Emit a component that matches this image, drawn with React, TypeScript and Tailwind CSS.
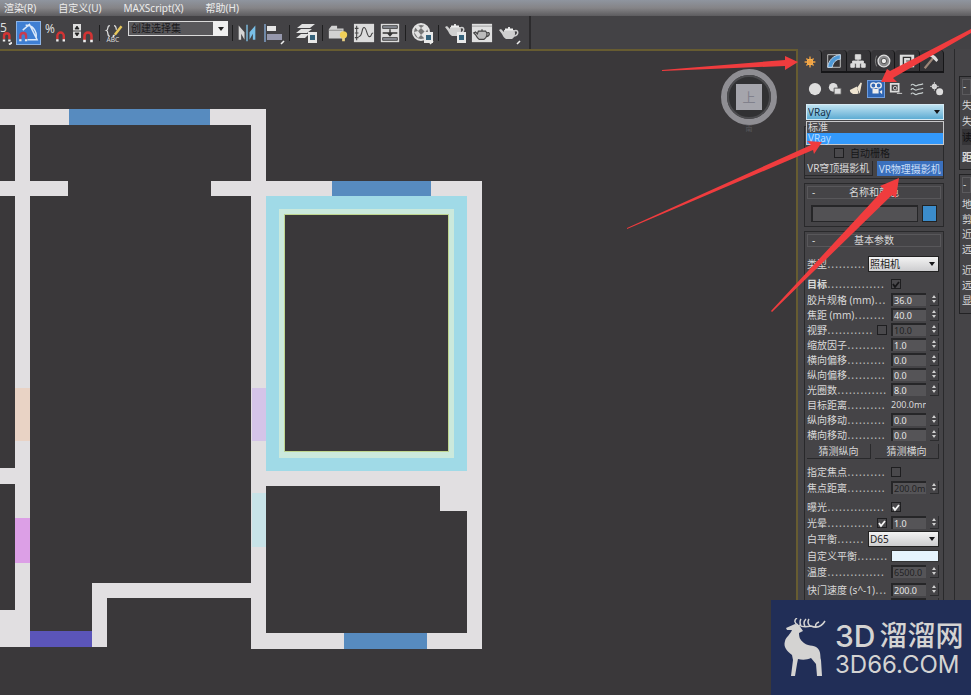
import React from "react";

const menus = ["渲染(R)", "自定义(U)", "MAXScript(X)", "帮助(H)"];

function Tool({ label, w, active, children }: { label: string; w: string; active?: boolean; children: React.ReactNode }) {
  return (
    <button aria-label={label} className={`flex h-6 shrink-0 items-center justify-center ${w} ${active ? "border border-[#8db4e6] bg-[#3f7fd3]" : ""}`}>
      <svg viewBox="0 0 24 24" className="h-6 w-full shrink-0" fill="none">{children}</svg>
    </button>
  );
}

const Sep = () => <span className="h-4 w-px shrink-0 bg-[#1e1e1f]" />;

const Magnet = () => (
  <>
    <path d="M13.500 19v-4a3.500 3.500 0 0 1 7 0v4" stroke="#d23434" strokeWidth="2.600" />
    <path d="M12.200 20h2.600M19.200 20h2.600" stroke="#eee" strokeWidth="2.600" />
  </>
);

const Flyout = () => <path d="M20 23l3-3" stroke="#eee" strokeWidth="1.6" />;

const Teapot = () => (
  <>
    <path d="M7 9h10c2 3 1 7-2 9H9c-2-1-3-3-4-5L2 9l2-1 3 3z" fill="#cfcfcf" />
    <path d="M17 10c5-2 5 4 0 5" stroke="#cfcfcf" strokeWidth="1.5" />
    <path d="M8 8.500h8M12 8V6" stroke="#efefef" strokeWidth="1.8" />
  </>
);

const Page = () => (
  <>
    <path d="M14 11h9v11h-9z" fill="#e8e8e8" />
    <path d="M16 14h5v5h-5z" fill="#35637c" />
  </>
);

function Toolbar() {
  return (
    <div className="flex h-[33px] shrink-0 items-center gap-1 overflow-hidden bg-[#434245]">
      <button aria-label="5" className="relative h-6 w-3 shrink-0">
        <svg viewBox="0 0 12 24" className="h-6 w-3" fill="none">
          <text x="0" y="11" fontSize="12" fill="#ddd" fontFamily="Noto Sans">5</text>
          <path d="M4 18v-3a2.700 2.700 0 0 1 5.400 0v3" stroke="#d23434" strokeWidth="2.400" />
          <path d="M2.800 19.500h2.400M8.200 19.500h2.400M9 23.500l3-2" stroke="#eee" strokeWidth="2" />
        </svg>
      </button>
      <Tool label="角度捕捉" w="w-[25px]" active>
        <path d="M3.500 18v-3a3 3 0 0 1 6 0v3" stroke="#c83c50" strokeWidth="2.400" />
        <path d="M2.300 19.500h2.400M8.300 19.500h2.400" stroke="#eee" strokeWidth="2" />
        <path d="M6 9L13 3l8 16H11M9 4c7-1 12 6 11 13" stroke="#dbe9fa" strokeWidth="1.500" />
      </Tool>
      <Tool label="百分比捕捉" w="w-[22px]">
        <text x="0" y="12" fontSize="13" fill="#ddd" fontFamily="Noto Sans">%</text>
        <Magnet />
      </Tool>
      <Tool label="微调器捕捉" w="w-6">
        <path d="M2 3h8v14H2z" fill="#ddd" />
        <path d="M4 8l2-3 2 3zM4 12l2 3 2-3zM2 10h8" fill="#222" stroke="#222" strokeWidth=".8" />
        <Magnet />
      </Tool>
      <Sep />
      <Tool label="编辑命名选择集" w="w-5">
        <path d="M7 3C3 3 6 8 3 9c3 1 0 7 4 7M12 3c3 0 2 3 3 5" stroke="#ddd" strokeWidth="1.500" />
        <path d="M21 4l-8 10" stroke="#e8c75a" strokeWidth="3" />
        <path d="M12.500 14.500l-2 2" stroke="#eee" strokeWidth="2" />
        <text x="3" y="23" fontSize="8" fill="#ddd" fontFamily="Noto Sans">ABC</text>
      </Tool>
      <div className="relative mb-2 h-[15px] w-[100px] shrink-0">
        <select aria-label="命名选择集" className="block h-full w-full appearance-none border border-[#dadada] bg-[#59585b] px-0.5 text-[10px] leading-[13px] text-[#19191b]">
          <option>创建选择集</option>
        </select>
        <span className="pointer-events-none absolute inset-y-0 right-0 flex w-[15px] items-center justify-center bg-[#f0f0f0]">
          <svg viewBox="0 0 6 4" className="h-1 w-1.5"><path d="M0 0h6L3 4z" fill="#222" /></svg>
        </span>
      </div>
      <Sep />
      <Tool label="镜像" w="w-5">
        <path d="M2 20V3l7 8v9l-4-7v7z" fill="#d6d6d6" />
        <path d="M22 20V3l-7 8v9l4-7v7z" fill="#79bfe8" />
        <path d="M12 2v20" stroke="#86cdf5" strokeWidth="1.500" />
      </Tool>
      <Tool label="对齐" w="w-6">
        <path d="M4 3v18" stroke="#7fa2c8" strokeWidth="1.500" />
        <path d="M6 5h9v5H6z" fill="#e6e6e6" />
        <path d="M6 13h15v6H6z" fill="#9698ad" />
        <Flyout />
      </Tool>
      <Sep />
      <Tool label="层管理器" w="w-6">
        <path d="M8 3h13l-5 4H3zM7 8h11l-5 4H2zM7 13h8l-4 4H2z" fill="#e2e2e2" />
        <Page />
      </Tool>
      <Sep />
      <Tool label="石墨建模工具" w="w-[22px]">
        <path d="M2 8l3-4h6v3h7v11H2z" fill="#d2d2d2" />
        <path d="M2 9h15" stroke="#888" />
        <circle cx="18" cy="14" r="4" fill="#f0cf58" />
        <path d="M18 17v4" stroke="#e9d084" strokeWidth="3" />
      </Tool>
      <Tool label="曲线编辑器" w="w-[22px]">
        <path d="M1 2h22v20H1z" fill="#dcdcdc" />
        <path d="M4 4v16M2 7h4M2 12h4M2 17h4M6 16c5 0 3-10 6-10s3 10 6 10 1-4 4-4" stroke="#444" strokeWidth="1.200" />
      </Tool>
      <Tool label="图解视图" w="w-[22px]">
        <path d="M2 2h20v20H2z" fill="#dcdcdc" />
        <path d="M4 4h16v3H4zM4 17h16v3H4z" fill="#8b8e96" stroke="#444" />
        <path d="M4 12h16M12 8v6M9.500 12L12 15l2.500-3" stroke="#333" strokeWidth="1.500" />
      </Tool>
      <Sep />
      <Tool label="材质编辑器" w="w-6">
        <circle cx="11" cy="11" r="8" fill="#777" stroke="#e2e2e2" strokeWidth="2" />
        <path d="M5 6l3-2 3 3-3 3zM11 7l4-3 3 4-3 3zM4 11l4-1 3 4-3 3zM11 14l4-4 4 3-4 5z" fill="#e2e2e2" />
        <Page />
        <Flyout />
      </Tool>
      <Sep />
      <Tool label="渲染设置" w="w-6">
        <g transform="translate(0 -3)"><Teapot /></g>
        <Page />
      </Tool>
      <Tool label="渲染帧窗口" w="w-[22px]">
        <path d="M1 2h22v20H1z" fill="#e0e0e0" />
        <path d="M1 4.500h22" stroke="#999" />
        <path d="M8 10h8c3 3 1 7-2 9H9c-2-1-3-3-4-5l-2-2 2-1 2 2zM17 12c4-2 4 3 0 4M12 10V8" stroke="#444" strokeWidth="1.300" fill="#bbb" />
      </Tool>
      <Tool label="渲染产品" w="w-6">
        <Teapot />
        <Flyout />
      </Tool>
      <span className="ml-1 h-full w-0.5 bg-[#2c2b2d]" />
    </div>
  );
}

function Viewport() {
  return (
    <main className="relative min-w-0 flex-1 overflow-hidden border-t-2 border-r-2 border-[#675c31] bg-[#3a383a]">
      <svg width="500" height="660" viewBox="0 51 500 660" className="block" role="img" aria-label="户型平面图">
        <g fill="#e1dfe1">
          <path d="M0 109h266v16H0zM0 181h68v15H0zM211 181h271v15H211zM15 109h15v538H15zM251 109h15v540H251zM467 181h15v468h-15zM0 468h30v16H0zM251 470h231v16H251zM440 470h42v41h-42zM251 633h231v16H251zM92 583h174v15H92zM92 583h15v64H92zM0 610h30v37H0z" />
        </g>
        <path d="M69 109h141v16H69zM332 181h99v15h-99zM344 633h83v16h-83z" fill="#578bbf" />
        <path d="M266 196h201v275H266z" fill="#a0dae7" />
        <path d="M279 209h175v249H279z" fill="#cbe9dc" />
        <path d="M284.500 214.500h164v237h-164z" fill="#3a383a" stroke="#bfd58f" />
        <path d="M15 388h15v53H15z" fill="#e9d3c5" />
        <path d="M15 518h15v45H15z" fill="#dc9fe6" />
        <path d="M252 388h14v53h-14z" fill="#d4c4e8" />
        <path d="M252 493h14v54h-14z" fill="#c8e3e8" />
        <path d="M30 631h62v16H30z" fill="#5b55b9" />
      </svg>
      <svg viewBox="0 0 60 64" className="absolute top-[17px] right-[17px] h-16 w-[60px]" role="img" aria-label="视图立方体">
        <circle cx="30" cy="29" r="25" fill="none" stroke="#8f8e93" strokeWidth="6" />
        <circle cx="30" cy="29" r="21" fill="#313133" stroke="#4b4b4e" strokeWidth="2" />
        <path d="M17 16h26v26H17z" fill="#a5a5ac" />
        <text x="30" y="34" fontSize="13" textAnchor="middle" fill="#81818c" fontFamily="Noto Sans CJK SC">上</text>
        <text x="30" y="63" fontSize="7" textAnchor="middle" fill="#59595d" fontFamily="Noto Sans CJK SC">南</text>
      </svg>
    </main>
  );
}

const tabs: [string, React.ReactNode][] = [
  ["创建", <><circle cx="10" cy="10" r="3.500" fill="#ffd27a" /><path d="M10 4v12M4 10h12M6 6l8 8M14 6l-8 8" stroke="#f0a040" strokeWidth="1.500" /></>],
  ["修改", <><path d="M3 3h14v14H3z" stroke="#ccc" /><path d="M3 17C4 9 9 4 17 3v5c-5 0-8 4-9 9z" fill="#4f9ad8" stroke="#cde" /></>],
  ["层次", <path d="M7 3h6v5H7zM2 13h4v4H2zM8 13h4v4H8zM14 13h4v4h-4zM10 8v5M4 13v-3h12v3" fill="#ddd" stroke="#ddd" />],
  ["运动", <><circle cx="11" cy="10" r="6.500" fill="#8b8b8d" stroke="#ddd" strokeWidth="1.500" /><circle cx="11" cy="10" r="3" fill="#eee" stroke="#444" /><path d="M3 4c-2 4-2 8 0 12" stroke="#888" /></>],
  ["显示", <><path d="M2 3h16v14H2z" fill="#ddd" /><path d="M6 6h8v8H6z" stroke="#333" strokeWidth="1.500" /><path d="M9 10h6" stroke="#333" /></>],
  ["工具", <><path d="M3 18L13 6" stroke="#9b8577" strokeWidth="2.500" /><path d="M7 4c4-2 8-1 11 5l-2 2-5-5z" fill="#ddd" /></>],
];

const cats: [string, React.ReactNode][] = [
  ["几何体", <circle cx="8" cy="8" r="7" fill="#dedede" />],
  ["图形", <><circle cx="6" cy="6" r="5" fill="#ddd" /><path d="M7 7h8v7H7z" fill="#ddd" stroke="#555" /></>],
  ["灯光", <><path d="M14 1l-4 6 2 4z" fill="#eee4d0" stroke="#eee4d0" strokeWidth="1.500" /><path d="M9 5L1 9c0 4 5 6 10 4z" fill="#eee4d0" /></>],
  ["摄影机", <><circle cx="5" cy="4" r="3" stroke="#eee" strokeWidth="1.500" /><circle cx="11" cy="4" r="3" stroke="#eee" strokeWidth="1.500" /><path d="M4 8h7v5H4zM12 11l3-2v5z" fill="#eee" /></>],
  ["辅助对象", <><path d="M2 2h9v9H2z" stroke="#ddd" strokeWidth="2" /><circle cx="7" cy="7" r="2" stroke="#ddd" /><path d="M9 13h6" stroke="#ddd" /></>],
  ["空间扭曲", <path d="M1 4c3-4 4 2 7 0s4 0 7-2M1 9c3-4 4 2 7 0s4 0 7-2M1 14c3-4 4 2 7 0s4 0 7-2" stroke="#c8d0d0" strokeWidth="1.300" />],
  ["系统", <><circle cx="5" cy="5" r="3" fill="#ddd" /><circle cx="11" cy="11" r="4" fill="#ddd" /><path d="M5 0v10M0 5h10" stroke="#ccc" /></>],
];

function Arrow() {
  return (
    <span className="pointer-events-none absolute inset-y-0 right-1 flex items-center">
      <svg viewBox="0 0 6 4" className="h-1 w-1.5"><path d="M0 0h6L3 4z" fill="#161618" /></svg>
    </span>
  );
}

function Spinner({ label }: { label: string }) {
  return (
    <button aria-label={`${label} 微调`} className="ml-1 flex h-[13px] w-[9px] shrink-0 items-center justify-center border-r border-b border-[#2c2c2e]">
      <svg viewBox="0 0 6 10" className="h-2.5 w-1.5"><path d="M1 4l2-3 2 3zM1 6h4L3 9z" fill="#d0d0d0" /></svg>
    </button>
  );
}

function Name({ text, id, dots }: { text: string; id: string; dots: number }) {
  return (
    <label htmlFor={id} className="flex min-w-0 flex-1 items-center whitespace-nowrap">
      {text}
      <span aria-hidden="true" className="font-['DejaVu_Sans',sans-serif] text-[12px] leading-[14px] font-normal text-[#b4b4b4]">{".".repeat(dots)}</span>
    </label>
  );
}

function Tick({ id, label, on, dark }: { id?: string; label?: string; on?: boolean; dark?: boolean }) {
  return (
    <span className="relative flex h-2.5 w-2.5 shrink-0">
      <input id={id} aria-label={label} type="checkbox" defaultChecked={on} className="h-2.5 w-2.5 appearance-none border border-[#1e1e20] bg-[#4a494c]" />
      {on && (
        <svg viewBox="0 0 10 10" className="pointer-events-none absolute inset-0 h-2.5 w-2.5" fill="none">
          <path d="M2 5l2 3 4-5" stroke={dark ? "#161618" : "#f5f5f5"} strokeWidth="1.800" />
        </svg>
      )}
    </span>
  );
}

function NumRow({ name, value, dots, dim, check }: { name: string; value: string; dots: number; dim?: boolean; check?: "on" | "off" }) {
  return (
    <div className="flex h-[15px] shrink-0 items-center">
      <Name text={name} id={name} dots={dots} />
      {check && <Tick label={`启用${name}`} on={check === "on"} />}
      <input id={name} defaultValue={value} className={`ml-1 h-[13px] w-[35px] shrink-0 border-t-2 border-l-2 border-[#262628] bg-[#555457] pl-px text-[9px] leading-[11px] ${dim ? "text-[#222224]" : "text-[#e6e6e6]"}`} />
      <Spinner label={name} />
    </div>
  );
}

function CheckRow({ name, dots, on, dark }: { name: string; dots: number; on?: boolean; dark?: boolean }) {
  return (
    <div className="flex h-4 shrink-0 items-center">
      <Name text={name} id={name} dots={dots} />
      <span className="ml-1 w-12"><Tick id={name} on={on} dark={dark} /></span>
    </div>
  );
}

function SelectRow({ name, value, dots }: { name: string; value: string; dots: number }) {
  return (
    <div className="flex h-[18px] shrink-0 items-center">
      <Name text={name} id={name} dots={dots} />
      <div className="relative h-4 w-[71px] shrink-0">
        <select id={name} className="block h-full w-full appearance-none border border-[#222] bg-linear-to-b from-[#f3f3f3] to-[#cdcdcf] px-px text-[10px] leading-[14px] text-[#1c1c1e]">
          <option>{value}</option>
        </select>
        <Arrow />
      </div>
    </div>
  );
}

function Header({ title }: { title: string }) {
  return (
    <button className="relative flex h-[13px] w-full shrink-0 items-center justify-center border border-[#58575a] text-[10px] leading-[11px]">
      <span className="absolute left-1">-</span>
      {title}
    </button>
  );
}

const push = "h-[15px] flex-1 border-r border-b border-[#29292b] leading-[14px] whitespace-nowrap";

function CommandPanel() {
  return (
    <aside className="relative flex w-[157px] shrink-0 flex-col overflow-hidden border-r border-[#2a2a2c]">
      <div className="flex h-6 shrink-0 pt-px pr-2.5">
        {tabs.map(([name, icon], i) => (
          <button key={name} aria-label={name} className={`flex flex-1 items-center justify-center rounded-t border-r ${i ? "border-b-2 border-[#161618] bg-[#363538]" : "border-[#161618]"}`}>
            <svg viewBox="0 0 20 20" className="h-[18px] w-[18px]" fill="none">{icon}</svg>
          </button>
        ))}
      </div>
      <div className="flex h-[31px] shrink-0 items-center justify-between pr-2 pl-2">
        {cats.map(([name, icon], i) => (
          <button key={name} aria-label={name} className={`flex h-[18px] w-[18px] items-center justify-center ${i === 3 ? "border border-[#6f9ddd] bg-[#2f66b4]" : ""}`}>
            <svg viewBox="0 0 16 16" className="h-3.5 w-3.5" fill="none">{icon}</svg>
          </button>
        ))}
      </div>
      <div className="relative mr-2.5 ml-2 h-4 shrink-0">
        <select aria-label="类别" className="block h-4 w-full appearance-none border border-[#d6ebf5] bg-linear-to-b from-[#bfe3f2] to-[#5dacd3] px-px text-[10px] leading-[14px] text-[#16324a]">
          <option>VRay</option>
        </select>
        <Arrow />
        <ul role="listbox" aria-label="类别" className="absolute top-[17px] right-0 left-0 z-10 border border-[#c8c8ca] bg-[#4c4b4e] text-[10px] leading-[11px]">
          <li role="option" aria-selected="false" className="h-[11px] px-px">标准</li>
          <li role="option" aria-selected="true" className="h-[11px] bg-[#3399fb] px-px text-[#b9dcff]">VRay</li>
        </ul>
      </div>

      <section className="mt-1.5 mr-2.5 ml-1.5 flex h-[53px] shrink-0 flex-col justify-end border border-[#29292b] pb-0.5">
        <div className="flex h-4 items-center justify-center gap-1.5 pr-6 text-[#161618]">
          <Tick id="autogrid" />
          <label htmlFor="autogrid">自动栅格</label>
        </div>
        <div className="flex gap-1">
          <button className="h-[15px] flex-1 border-r border-b border-[#29292b] leading-[14px] whitespace-nowrap">VR穹顶摄影机</button>
          <button className="h-[15px] flex-1 bg-[#3b70bd] leading-[14px] whitespace-nowrap text-[#c9def8]">VR物理摄影机</button>
        </div>
      </section>

      <section className="mt-1 mr-2.5 ml-1.5 shrink-0 border border-[#29292b] p-0.5">
        <Header title="名称和颜色" />
        <div className="mt-1.5 flex h-[19px] items-start gap-1 px-1">
          <input aria-label="名称" className="h-[17px] min-w-0 flex-1 border-2 border-r border-b border-[#262628] bg-[#525154]" />
          <button aria-label="颜色" className="h-[17px] w-[15px] border border-[#222] bg-[#3b8ccb]" />
        </div>
      </section>

      <section className="mt-1 mr-2.5 ml-1.5 flex shrink-0 flex-col border border-[#29292b] p-0.5">
        <Header title="基本参数" />
        <div className="mt-2 flex flex-col pr-0.5">
          <SelectRow name="类型" value="照相机" dots={10} />
          <div className="mt-[3px] flex flex-col font-bold"><CheckRow name="目标" dots={15} on dark /></div>
          <NumRow name="胶片规格 (mm)" value="36.0" dots={3} />
          <NumRow name="焦距 (mm)" value="40.0" dots={8} />
          <NumRow name="视野" value="10.0" dots={12} dim check="off" />
          <NumRow name="缩放因子" value="1.0" dots={10} />
          <NumRow name="横向偏移" value="0.0" dots={10} />
          <NumRow name="纵向偏移" value="0.0" dots={10} />
          <NumRow name="光圈数" value="8.0" dots={13} />
          <div className="flex h-[15px] items-center">
            <Name text="目标距离" id="target-distance" dots={10} />
            <output id="target-distance" className="ml-1 w-12 text-[9px]"><span className="block w-[35px] overflow-hidden">200.0mm</span></output>
          </div>
          <NumRow name="纵向移动" value="0.0" dots={10} />
          <NumRow name="横向移动" value="0.0" dots={10} />
          <div className="flex h-[18px] items-center gap-1">
            <button className={push}>猜测纵向</button>
            <button className={push}>猜测横向</button>
          </div>
          <div className="mt-1 flex flex-col"><CheckRow name="指定焦点" dots={10} /></div>
          <NumRow name="焦点距离" value="200.0m" dots={10} dim />
          <div className="mt-1 flex flex-col"><CheckRow name="曝光" dots={15} on /></div>
          <NumRow name="光晕" value="1.0" dots={12} check="on" />
          <SelectRow name="白平衡" value="D65" dots={7} />
          <div className="flex h-4 items-center">
            <Name text="自定义平衡" id="custom-balance" dots={8} />
            <button id="custom-balance" aria-label="自定义平衡" className="ml-1 h-3 w-12 border border-[#333] bg-[#e6f4fd]" />
          </div>
          <NumRow name="温度" value="6500.0" dots={15} dim />
          <div className="mt-[3px] flex flex-col"><NumRow name="快门速度 (s^-1)" value="200.0" dots={3} /></div>
          <NumRow name="快门角度 (度)" value="180.0" dots={5} dim />
        </div>
      </section>
    </aside>
  );
}

const box = "flex flex-col overflow-hidden border border-r-0 border-[#222224] pl-0.5 whitespace-nowrap";

function SideColumn() {
  return (
    <aside className="flex w-4 shrink-0 flex-col overflow-hidden pt-[27px] pl-1 leading-4">
      <section className={`${box} h-[94px] pt-0.5`}>
        <span className="h-4 border border-[#5b5a5d] leading-3">-</span>
        <span className="mt-0.5">失</span>
        <span>失</span>
        <button className="mb-1 h-4 self-start bg-[#353437] text-left leading-4 text-[#101012]">读</button>
        <strong>距</strong>
      </section>
      <section className={`${box} mt-1 h-[140px] pt-0.5 leading-[15px]`}>
        <span className="h-4 shrink-0 border border-[#5b5a5d] leading-3">-</span>
        <span className="mt-1">地</span>
        <span>剪</span>
        <span>近</span>
        <span>远</span>
        <span className="mt-1.5">近</span>
        <span>远</span>
        <span>显</span>
      </section>
    </aside>
  );
}

function Annotations() {
  return (
    <svg viewBox="626 0 345 320" className="pointer-events-none absolute top-0 right-0 z-20 h-80 w-[345px]" aria-hidden="true" fill="#f03c3e">
      <path d="M662 70L785 60V56L798 62L785 70V66L662 71z" />
      <path d="M881 82L887 69L890 71L971 29V33L893 78L897 82z" />
      <path d="M627 228L811 145L807 141L822 142L814 154L813 150L627 229z" />
      <path d="M771 311L884 189L880 186L899 178L896 198L892 195L772 312z" />
    </svg>
  );
}

function Brand() {
  return (
    <div className="absolute right-0 bottom-0 z-30 flex h-[95px] w-[200px] items-center bg-[#212e57] pl-3 text-[#d4d3d2]">
      <svg viewBox="0 0 44 60" className="h-[60px] w-11 shrink-0" fill="currentColor" role="img" aria-label="3D66">
        <path d="M3 10l9-4 4 1 4 6-4 2c0 4 1 7 5 10 5 4 12 1 15 7 2 4 1 7 2 10l1 16h-5l-1-12-5-6c-4 2-9 2-13 1l-1 5-2 12H8l2-16-1-5C4 33 0 29 2 23c1-4 5-6 7-11H4z" />
        <path d="M15 7C11 5 11 2 14 0M16 7c4 3 8 2 12 1 7 3 11 0 14-5M18 8c-1-3-2-4 0-7M22 8c-2-3-1-5 1-7M27 8c-2-2-3-4-1-7M33 9c-1-2 0-4 3-5" fill="none" stroke="currentColor" strokeWidth="1.500" />
      </svg>
      <div className="ml-2 flex flex-col whitespace-nowrap">
        <div className="flex items-center justify-between gap-1 font-['Inter','Noto_Sans_CJK_SC',sans-serif] text-[28px] leading-[34px] font-medium">
          <span className="text-[30px]">3D</span>
          <span>溜溜网</span>
        </div>
        <span className="font-['Inter',sans-serif] text-[24px] leading-6">3D66.COM</span>
      </div>
    </div>
  );
}

export default function App() {
  return (
    <div className="relative flex h-screen flex-col overflow-hidden bg-[#454447] font-['Noto_Sans','Noto_Sans_CJK_SC',sans-serif] text-[10px] leading-[14px] text-[#d8d8d8]">
      <nav className="flex h-4 shrink-0 items-center gap-[22px] bg-linear-to-b from-[#8f959f] via-[#858487] to-[#5d5c5f] pl-1 text-[#ececec]">
        {menus.map((m) => <button key={m}>{m}</button>)}
      </nav>
      <Toolbar />
      <div className="flex min-h-0 flex-1">
        <Viewport />
        <CommandPanel />
        <SideColumn />
      </div>
      <Annotations />
      <Brand />
    </div>
  );
}
